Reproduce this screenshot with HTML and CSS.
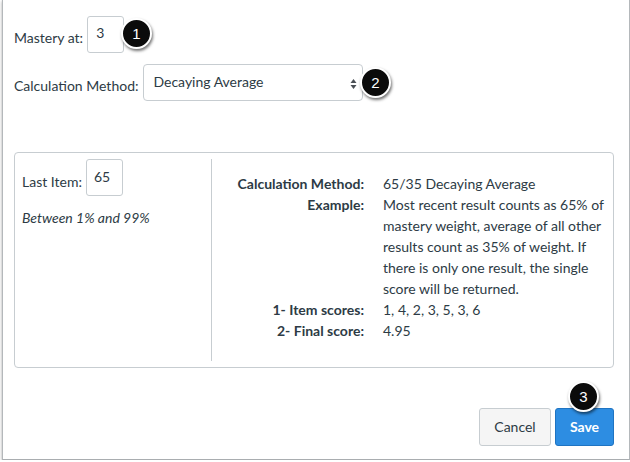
FILE: index.html
```html
<!DOCTYPE html>
<html lang="en">
<head>
<meta charset="utf-8">
<title>Mastery settings</title>
<link rel="stylesheet" href="styles.css">
</head>
<body>
<div class="frame">
  <div class="field field-mastery">
    <span class="field-label">Mastery at:</span>
    <div class="text-input input-mastery">3</div>
  </div>
  <div class="field field-method">
    <span class="field-label">Calculation Method:</span>
    <div class="select">
      <span class="select-value">Decaying Average</span>
      <svg class="select-arrows" width="7" height="12" viewBox="0 0 7 12"><path d="M3.5 1 L6.5 5 L0.5 5 Z M3.5 11 L6.5 7 L0.5 7 Z" fill="#4a4f55"/></svg>
    </div>
  </div>

  <div class="panel">
    <div class="panel-left">
      <div class="field field-last">
        <span class="field-label">Last Item:</span>
        <div class="text-input input-last">65</div>
      </div>
      <p class="hint">Between 1% and 99%</p>
    </div>
    <div class="panel-right">
      <div class="details">
        <span class="d-label">Calculation Method:</span>
        <span class="d-value">65/35 Decaying Average</span>
        <span class="d-label">Example:</span>
        <span class="d-value">Most recent result counts as 65% of<br>mastery weight, average of all other<br>results count as 35% of weight. If<br>there is only one result, the single<br>score will be returned.</span>
        <span class="d-label">1- Item scores:</span>
        <span class="d-value">1, 4, 2, 3, 5, 3, 6</span>
        <span class="d-label">2- Final score:</span>
        <span class="d-value">4.95</span>
      </div>
    </div>
  </div>

  <div class="actions">
    <button class="btn btn-default">Cancel</button>
    <button class="btn btn-primary">Save</button>
  </div>

  <span class="badge badge-1">1</span>
  <span class="badge badge-2">2</span>
  <span class="badge badge-3">3</span>
</div>
</body>
</html>
```

FILE: styles.css
```css
html, body {
  margin: 0;
  padding: 0;
  background: #ffffff;
}

body {
  font-family: Lato, "Noto Sans", sans-serif;
  font-size: 14px;
  line-height: 20px;
  color: #2d3b45;
}

.frame {
  position: relative;
  box-sizing: border-box;
  margin-left: 2px;
  width: 628px;
  height: 460px;
  border-left: 1px solid #b4b8bb;
  border-right: 1px solid #b4b8bb;
  border-bottom: 1px solid #a9adb0;
  box-shadow: 0 1px 3px rgba(0, 0, 0, 0.35);
  padding: 16px 15px 0 11px;
  background: #fff;
}

.field {
  display: flex;
  align-items: flex-start;
}

.field-label {
  white-space: nowrap;
}

.field-mastery .field-label {
  padding-top: 12px;
  margin-right: 4px;
}

.text-input {
  box-sizing: border-box;
  width: 37px;
  height: 37px;
  border: 1px solid #c7cdd1;
  border-radius: 3px;
  background: #fff;
  padding-left: 8px;
}

.input-mastery {
  padding-top: 6px;
}

.field-method {
  margin-top: 11px;
}

.field-method .field-label {
  padding-top: 12px;
  margin-right: 5px;
}

.select {
  box-sizing: border-box;
  width: 220px;
  height: 37px;
  border: 1px solid #c7cdd1;
  border-radius: 4px;
  background: #fff;
  display: flex;
  align-items: flex-start;
  justify-content: space-between;
  padding: 8px 5px 0 9px;
}

.select-value {
  margin-top: -1px;
}

.select-arrows {
  margin-top: 5px;
}

.panel {
  margin-top: 51px;
  box-sizing: border-box;
  width: 600px;
  border: 1px solid #c7cdd1;
  border-radius: 4px;
  padding: 6px 0 6px 7px;
  display: flex;
}

.panel-left {
  width: 189px;
  flex: none;
}

.field-last .field-label {
  padding-top: 13px;
  margin-right: 4px;
}

.input-last {
  padding-top: 7px;
  padding-left: 7px;
}

.hint {
  margin: 12px 0 0 0;
  font-style: italic;
}

.panel-right {
  flex: 1;
  border-left: 1px solid #c7cdd1;
  height: 202px;
  box-sizing: border-box;
  padding-top: 14px;
}

.details {
  display: grid;
  grid-template-columns: 152px auto;
  column-gap: 19px;
  line-height: 21px;
}

.d-label {
  font-weight: 700;
  text-align: right;
  white-space: nowrap;
}

.d-value {
  white-space: nowrap;
}

.actions {
  margin-top: 40px;
  width: 600px;
  display: flex;
  justify-content: flex-end;
  gap: 4px;
}

.btn {
  box-sizing: border-box;
  height: 38px;
  border-radius: 3px;
  font-family: Lato, "Noto Sans", sans-serif;
  font-size: 14px;
  line-height: 20px;
  padding: 0;
  cursor: pointer;
}

.btn-default {
  width: 72px;
  background: #f5f5f5;
  border: 1px solid #c7cdd1;
  color: #2d3b45;
}

.btn-primary {
  width: 59px;
  background: #2d8de2;
  border: 1px solid #1f74c2;
  color: #fff;
  font-weight: 700;
}

.badge {
  position: absolute;
  box-sizing: border-box;
  width: 31px;
  height: 31px;
  border-radius: 50%;
  background: #0b0b0b;
  border: 2px solid #fff;
  box-shadow: 1px 2px 3px rgba(0, 0, 0, 0.55);
  color: #fff;
  font-family: "Liberation Sans", Arial, sans-serif;
  font-size: 15px;
  line-height: 27px;
  text-align: center;
}

.badge-1 {
  left: 118px;
  top: 18px;
}

.badge-2 {
  left: 357px;
  top: 67px;
}

.badge-3 {
  left: 565px;
  top: 381px;
}
```
